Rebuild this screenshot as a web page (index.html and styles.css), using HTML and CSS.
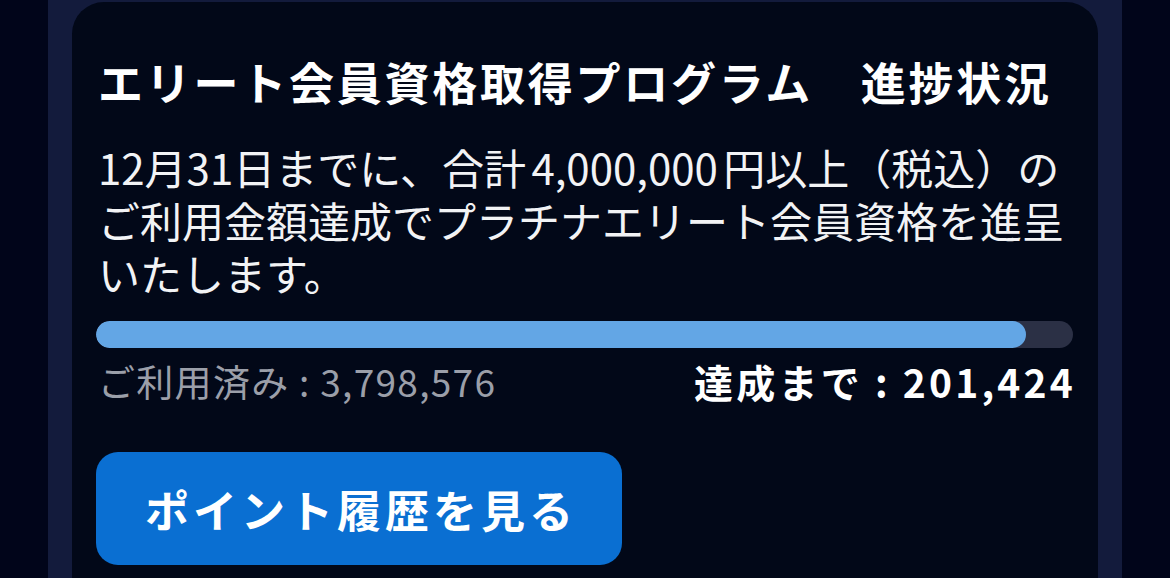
FILE: index.html
```html
<!DOCTYPE html>
<html lang="ja">
<head>
<meta charset="utf-8">
<link rel="stylesheet" href="styles.css">
</head>
<body>
<div class="page">
  <div class="band">
    <section class="card">
      <h1 class="title">エリート会員資格取得プログラム　進捗状況</h1>
      <p class="desc">12月31日までに、合計 4,000,000 円以上（税込）の<br>ご利用金額達成でプラチナエリート会員資格を進呈<br>いたします。</p>
      <div class="track"><div class="fill" style="width:95.2%"></div></div>
      <div class="labels">
        <span class="used">ご利用済み : 3,798,576</span>
        <span class="remain">達成まで : 201,424</span>
      </div>
      <button class="btn">ポイント履歴を見る</button>
    </section>
  </div>
</div>
</body>
</html>
```
FILE: styles.css
```css
html, body {
  margin: 0;
  padding: 0;
  height: 100%;
  overflow: hidden;
  background: #01051a;
  font-family: "Noto Sans CJK JP", "Noto Sans", sans-serif;
}
.page {
  display: flex;
  justify-content: center;
  height: 100%;
}
.band {
  width: 1074px;
  background: #131b3c;
  padding: 2px 24px 0;
  box-sizing: border-box;
}
.card {
  background: #020818;
  border-radius: 32px 32px 0 0;
  padding: 50px 25px 40px 24px;
  min-height: 700px;
  box-sizing: border-box;
}
.title {
  margin: 0;
  color: #ffffff;
  font-size: 45px;
  line-height: 60px;
  font-weight: 700;
  letter-spacing: 2.75px;
  padding-left: 2px;
  white-space: nowrap;
}
.desc {
  margin: 28px 0 0;
  color: #f2f3f5;
  font-size: 42px;
  line-height: 53px;
  font-weight: 400;
  letter-spacing: 0;
  word-spacing: -4px;
  padding-left: 2px;
  white-space: nowrap;
}
.track {
  margin-top: 22px;
  height: 27px;
  border-radius: 14px;
  background: #2b3045;
  overflow: hidden;
}
.fill {
  height: 100%;
  border-radius: 14px;
  background: #63a6e5;
}
.labels {
  margin-top: 11px;
  display: flex;
  justify-content: space-between;
  align-items: center;
  line-height: 44px;
}
.used {
  color: #9b9fa9;
  font-size: 37px;
  letter-spacing: 1.3px;
  padding-left: 2px;
}
.remain {
  color: #ffffff;
  font-size: 39px;
  font-weight: 700;
  letter-spacing: 3.2px;
  margin-right: -3px;
}
.btn {
  display: block;
  margin-top: 49px;
  width: 526px;
  height: 113px;
  border: none;
  border-radius: 22px;
  background: #0a6fd2;
  color: #ffffff;
  font-family: inherit;
  font-size: 44px;
  font-weight: 700;
  letter-spacing: 4px;
  padding: 0 0 0 4px;
}
```
